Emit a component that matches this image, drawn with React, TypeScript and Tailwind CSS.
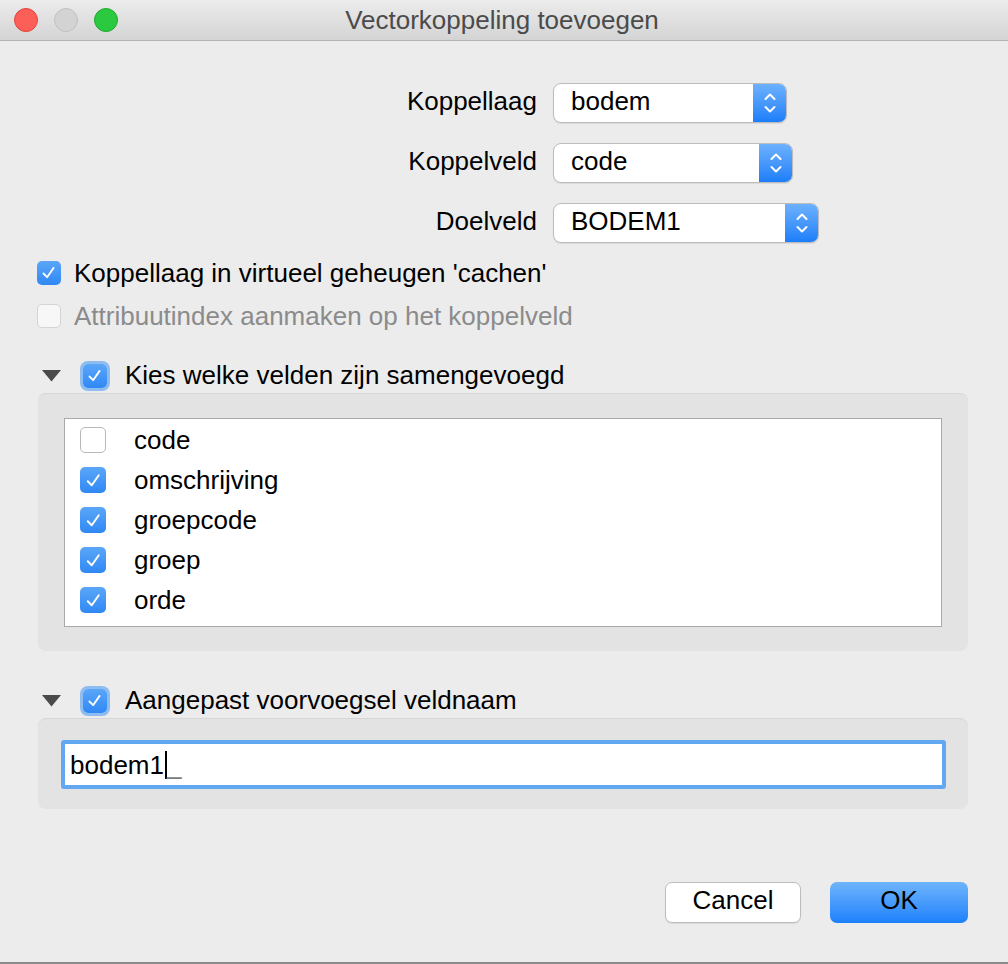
import React from "react";

function Check({ size = 22 }: { size?: number }) {
  return (
    <svg width={size * 0.72} height={size * 0.72} viewBox="0 0 16 16" fill="none">
      <path d="M3.2 8.8 L6.6 12.2 L12.6 3.6" stroke="white" strokeWidth="1.7" strokeLinecap="round" strokeLinejoin="round" />
    </svg>
  );
}

function CheckedBox({ focus = false, big = false }: { focus?: boolean; big?: boolean }) {
  return (
    <div
      className={
        (big ? "w-[26px] h-[26px] " : "w-[24px] h-[24px] ") +
        "rounded-[5px] bg-gradient-to-b from-[#5aa6f8] to-[#2f88f5] flex items-center justify-center shrink-0 " +
        (focus ? "ring-[3px] ring-[#8dbdf0]" : "")
      }
    >
      <Check size={big ? 26 : 24} />
    </div>
  );
}

function Combo({ value, width }: { value: string; width: string }) {
  return (
    <div className={"flex h-[40px] ml-[16px] rounded-[8px] border border-[#bcbcbc] shadow-[0_1px_1px_rgba(0,0,0,0.08)] overflow-hidden bg-white " + width}>
      <div className="flex-1 flex items-center pl-[17px] pb-[5px] text-[26px] leading-[30px] text-black">{value}</div>
      <div className="w-[33px] bg-gradient-to-b from-[#6cb1fd] to-[#1b7ef9] flex items-center justify-center">
        <svg width="14" height="24" viewBox="0 0 14 24" fill="none">
          <path d="M2.5 8 L7 3.5 L11.5 8" stroke="white" strokeWidth="2" strokeLinecap="round" strokeLinejoin="round" />
          <path d="M2.5 16 L7 20.5 L11.5 16" stroke="white" strokeWidth="2" strokeLinecap="round" strokeLinejoin="round" />
        </svg>
      </div>
    </div>
  );
}

function Triangle() {
  return (
    <svg width="19" height="12" viewBox="0 0 19 12" className="shrink-0">
      <path d="M0 0 L19 0 L9.5 11.5 Z" fill="#4a4a4a" />
    </svg>
  );
}

export default function App() {
  const items: [string, boolean][] = [
    ["code", false],
    ["omschrijving", true],
    ["groepcode", true],
    ["groep", true],
    ["orde", true],
  ];
  return (
    <div className="w-[1008px] h-[964px] bg-[#ececec] flex flex-col font-['Liberation_Sans',Arial,sans-serif] leading-[30px] text-black border-b-2 border-[#8a8a8a] overflow-hidden">
      {/* Title bar */}
      <div className="h-[41px] shrink-0 grid grid-cols-[1fr_auto_1fr] items-center bg-gradient-to-b from-[#ececec] to-[#d4d4d4] border-b border-[#b2b2b2]">
        <div className="flex items-center gap-[16px] pl-[14px]">
          <div className="w-[24px] h-[24px] rounded-full bg-[#fc5f57] border border-[#e0443e]" />
          <div className="w-[24px] h-[24px] rounded-full bg-[#d3d3d3] border border-[#c1c1c1]" />
          <div className="w-[24px] h-[24px] rounded-full bg-[#2ac940] border border-[#1faa2f]" />
        </div>
        <div className="text-[26px] leading-[30px] text-[#4b4b4b] -ml-[4px]">Vectorkoppeling toevoegen</div>
        <div />
      </div>

      {/* Form rows */}
      <div className="flex flex-col gap-[20px] pt-[42px]">
        <div className="flex items-center h-[40px]">
          <div className="w-[537px] text-right text-[26px] leading-[30px] pb-[5px]">Koppellaag</div>
          <Combo value="bodem" width="w-[234px]" />
        </div>
        <div className="flex items-center h-[40px]">
          <div className="w-[537px] text-right text-[26px] leading-[30px] pb-[5px]">Koppelveld</div>
          <Combo value="code" width="w-[240px]" />
        </div>
        <div className="flex items-center h-[40px]">
          <div className="w-[537px] text-right text-[26px] leading-[30px] pb-[5px]">Doelveld</div>
          <Combo value="BODEM1" width="w-[266px]" />
        </div>
      </div>

      {/* Checkboxes */}
      <div className="flex flex-col gap-[18px] pl-[37px] mt-[17px]">
        <div className="flex items-center h-[25px]">
          <CheckedBox />
          <span className="ml-[13px] text-[26px] leading-[30px]">Koppellaag in virtueel geheugen 'cachen'</span>
        </div>
        <div className="flex items-center h-[25px]">
          <div className="w-[24px] h-[24px] rounded-[5px] bg-[#f7f7f7] border border-[#d4d4d4] shrink-0" />
          <span className="ml-[13px] text-[26px] leading-[30px] text-[#8b8b8b]">Attribuutindex aanmaken op het koppelveld</span>
        </div>
      </div>

      {/* Section 1 header */}
      <div className="flex items-center h-[28px] mt-[34px] pl-[42px]">
        <Triangle />
        <div className="ml-[22px]">
          <CheckedBox focus />
        </div>
        <span className="ml-[18px] text-[26px] leading-[30px] pb-[2px]">Kies welke velden zijn samengevoegd</span>
      </div>

      {/* Group 1 */}
      <div className="ml-[38px] mt-[3px] w-[930px] h-[258px] shrink-0 rounded-[8px] bg-[#e3e3e3] border-t border-[#d6d6d6] pt-[24px] px-[26px]">
        <div className="h-[209px] bg-white border border-[#a9a9a9] pt-[1px] flex flex-col">
          {items.map(([name, checked]) => (
            <div key={name} className="h-[40px] shrink-0 flex items-center pl-[15px]">
              {checked ? (
                <CheckedBox big />
              ) : (
                <div className="w-[26px] h-[26px] rounded-[5px] bg-white border border-[#b8b8b8] shrink-0" />
              )}
              <span className="ml-[28px] text-[26px] leading-[30px]">{name}</span>
            </div>
          ))}
        </div>
      </div>

      {/* Section 2 header */}
      <div className="flex items-center h-[28px] mt-[36px] pl-[42px]">
        <Triangle />
        <div className="ml-[22px]">
          <CheckedBox focus />
        </div>
        <span className="ml-[18px] text-[26px] leading-[30px] pb-[2px]">Aangepast voorvoegsel veldnaam</span>
      </div>

      {/* Group 2 */}
      <div className="ml-[38px] mt-[3px] w-[930px] h-[91px] shrink-0 rounded-[8px] bg-[#e3e3e3] border-t border-[#d6d6d6] pt-[21px] pl-[23px] pr-[22px]">
        <div className="h-[49px] bg-white border-[4px] border-[#62a8f1] rounded-[3px] flex items-center pl-[5px]">
          <span className="text-[26px] leading-[30px]">bodem1</span>
          <span className="w-[2px] h-[28px] bg-black ml-[1px]" />
          <span className="text-[26px] leading-[30px] text-[#7a7a7a]">_</span>
        </div>
      </div>

      {/* Buttons */}
      <div className="flex justify-end gap-[29px] pr-[40px] mt-[73px]">
        <button className="w-[136px] h-[41px] rounded-[7px] bg-white border border-[#bdbdbd] shadow-[0_1px_1px_rgba(0,0,0,0.08)] text-[26px] leading-[30px] text-black flex items-center justify-center pb-[5px]">
          Cancel
        </button>
        <button className="w-[138px] h-[41px] rounded-[7px] bg-gradient-to-b from-[#6db4fb] to-[#1a80fb] text-[26px] leading-[30px] text-black flex items-center justify-center pb-[5px]">
          OK
        </button>
      </div>
    </div>
  );
}
